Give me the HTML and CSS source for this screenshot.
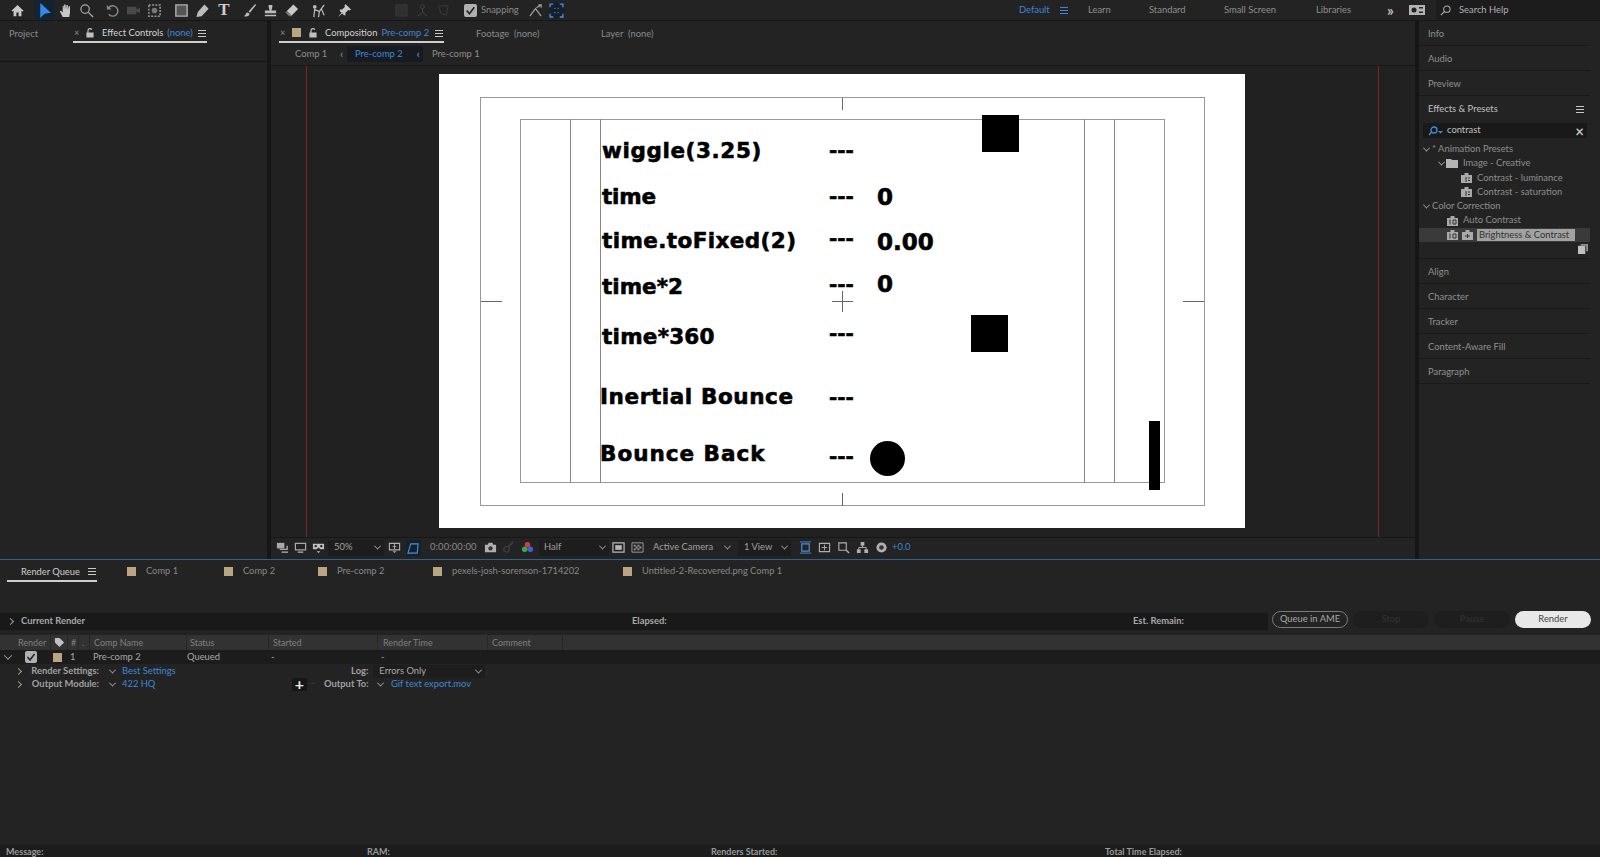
FILE: index.html
```html
<!DOCTYPE html>
<html lang="en">
<head>
<meta charset="utf-8">
<title>After Effects</title>
<link rel="stylesheet" href="styles.css">
</head>
<body>
<div class="app">
  <header class="toolbar">
    <div class="tools">
      <div class="tool home"><svg viewBox="0 0 16 16" class="ic"><path d="M8 2 1.5 8.2 3 9l.8-.7V14h3v-4h2.4v4h3V8.300l.8.7 1.500-.8z" fill="#c8c8c8"/></svg></div>
      <div class="group">
        <div class="tool active"><svg viewBox="0 0 16 16" class="ic lg"><path d="M4 1v14l4-4 6-1z" fill="#2d8ceb"/></svg></div>
        <div class="tool"><svg viewBox="0 0 16 16" class="ic"><path d="M5 15 2 9l1-1 2 2V3l1 0 .5 4V1.500h1.500L8.500 7l.5-5h1.500v5.500l1-4h1.300V10L12 15z" fill="#c8c8c8"/></svg></div>
        <div class="tool"><svg viewBox="0 0 16 16" class="ic"><circle cx="6.500" cy="6.500" r="4.500" fill="none" stroke="#a8a8a8" stroke-width="1.300"/><path d="m10 10 5 5" stroke="#a8a8a8" stroke-width="1.500"/></svg></div>
      </div>
      <div class="group">
        <div class="tool"><svg viewBox="0 0 16 16" class="ic"><path d="M4 5a5.500 5.500 0 1 1 0 7" fill="none" stroke="#8a8a8a" stroke-width="1.500"/><path d="m2 2 0 5 5 0z" fill="#8a8a8a"/></svg></div>
        <div class="tool"><svg viewBox="0 0 16 16" class="ic"><path d="M1 4h10v8H1zM11 7l4-2v6l-4-2z" fill="#4a4a4a"/></svg></div>
        <div class="tool"><svg viewBox="0 0 16 16" class="ic"><path d="M2 2h12v12H2z" fill="none" stroke="#9a9a9a" stroke-width="1.600" stroke-dasharray="2 1.500"/><circle cx="8" cy="8" r="3" fill="#777"/></svg></div>
      </div>
      <div class="group">
        <div class="tool"><svg viewBox="0 0 16 16" class="ic"><path d="M2 2h12v12H2z" fill="#555" stroke="#b0b0b0" stroke-width="1.500"/></svg></div>
        <div class="tool"><svg viewBox="0 0 16 16" class="ic"><path d="M10 1.500 14.500 6 7 14l-5.500 1L3 9.500z" fill="#bcbcbc"/></svg></div>
        <div class="tool tool-t">T</div>
      </div>
      <div class="group">
        <div class="tool"><svg viewBox="0 0 16 16" class="ic"><path d="M14 1 7 9l1.500 1.500L15 2zM6 10c-2 0-2 3-4 4 3 1 6 0 6-2.500z" fill="#bcbcbc"/></svg></div>
        <div class="tool"><svg viewBox="0 0 16 16" class="ic"><path d="M6 2h4v2L9 8h5v3H2V8h5L6 4zM2 12.500h12V14H2z" fill="#bcbcbc"/></svg></div>
        <div class="tool"><svg viewBox="0 0 16 16" class="ic"><path d="M10 1.500 15 6.500 8 13.500 3 8.500z" fill="#c8c8c8"/><path d="M3 8.500 1.500 10l4 4H8l.5-.5z" fill="#777"/></svg></div>
      </div>
      <div class="group">
        <div class="tool"><svg viewBox="0 0 16 16" class="ic"><circle cx="4" cy="4" r="2" fill="#bcbcbc"/><path d="M4 6 3 15M4 7l5 2 5-7M9 9l-1 6M11 6l3 7" stroke="#bcbcbc" stroke-width="1.300" fill="none"/></svg></div>
      </div>
      <div class="group">
        <div class="tool"><svg viewBox="0 0 16 16" class="ic"><path d="m9 1 6 6-2 1-1-.500L9 10.500V13l-1.500 0L3 8.500V7h2.500L8.500 4 8 3zM5 10l-4 5 5-4z" fill="#c8c8c8"/></svg></div>
      </div>
      <div class="group g-dim">
        <div class="tool"><svg viewBox="0 0 16 16" class="ic"><path d="M2 2h12v12H2z" fill="#303030" stroke="#3a3a3a"/></svg></div>
        <div class="tool"><svg viewBox="0 0 16 16" class="ic"><circle cx="8" cy="4" r="2" fill="none" stroke="#444"/><path d="M8 6v4M8 10l-5 4M8 10l5 4" stroke="#444" fill="none"/></svg></div>
        <div class="tool"><svg viewBox="0 0 16 16" class="ic"><path d="m3 3 10 0-2 10-6-2z" fill="none" stroke="#3c3c3c"/></svg></div>
      </div>
      <div class="snap">
        <span class="check"><svg viewBox="0 0 12 12"><path d="m2.500 6 2.500 3 4.500-6" fill="none" stroke="#222" stroke-width="1.500"/></svg></span>
        <span class="dim-label">Snapping</span>
        <svg viewBox="0 0 16 16" class="ic snap-a"><path d="m2 14 6-8 6 8M9 5l5-3M11 2h3v3" fill="none" stroke="#a0a0a0" stroke-width="1.300"/></svg>
        <span class="snap-b"><svg viewBox="0 0 14 14"><path d="M1 4V1h3M10 1h3v3M13 10v3h-3M4 13H1v-3" fill="none" stroke="#4a8fd8" stroke-width="1.300"/><path d="M5 5h1M8 5h1M5 9h1M8 9h1" stroke="#4a8fd8"/></svg></span>
      </div>
    </div>
    <nav class="workspaces">
      <span class="blue ws-default">Default</span>
      <span class="ham ham-blue"></span>
      <span class="ws-item ws-learn">Learn</span>
      <span class="ws-item ws-std">Standard</span>
      <span class="ws-item ws-small">Small Screen</span>
      <span class="ws-item ws-lib">Libraries</span>
      <span class="ws-more">»</span>
      <span class="ws-cam"><svg viewBox="0 0 16 10"><path d="M0 0h16v10H0z" fill="#b4b4b4"/><circle cx="5" cy="5" r="2.500" fill="#222"/><path d="M10 2h4v1.500h-4zM10 6.500h4V8h-4z" fill="#222"/></svg></span>
      <div class="help">
        <svg viewBox="0 0 12 12" class="help-ic"><circle cx="7.500" cy="4.500" r="3.500" fill="none" stroke="#b0b0b0" stroke-width="1.100"/><path d="M5 7 1 11" stroke="#b0b0b0" stroke-width="1.200"/></svg>
        <span>Search Help</span>
      </div>
    </nav>
  </header>

  <main class="work">
    <section class="left">
      <div class="tabs left-tabs">
        <span class="tab-plain project">Project</span>
        <div class="tab-on ec">
          <span class="x">×</span>
          <svg viewBox="0 0 10 10" class="lock"><path d="M2 5h6v4H2zM3 5V2.500a2 2 0 0 1 3.800-.8" fill="none" stroke="#c0c0c0" stroke-width="1.200"/><path d="M2 5h6v4H2z" fill="#c0c0c0"/></svg>
          <span class="on-text">Effect Controls</span>
          <span class="blue">(none)</span>
          <span class="ham"></span>
        </div>
      </div>
    </section>

    <section class="center">
      <div class="center-head">
        <div class="tabs">
          <div class="tab-on comp-tab">
            <span class="x">×</span>
            <span class="swatch"></span>
            <svg viewBox="0 0 10 10" class="lock"><path d="M2 5h6v4H2zM3 5V2.500a2 2 0 0 1 3.800-.8" fill="none" stroke="#c0c0c0" stroke-width="1.200"/><path d="M2 5h6v4H2z" fill="#c0c0c0"/></svg>
            <span class="on-text">Composition</span>
            <span class="blue">Pre-comp 2</span>
            <span class="ham"></span>
          </div>
          <span class="tab-plain footage">Footage&nbsp; (none)</span>
          <span class="tab-plain layer">Layer&nbsp; (none)</span>
        </div>
        <div class="crumbs">
          <span class="crumb-a">Comp 1</span>
          <span class="crumb-sep">‹</span>
          <span class="crumb-on"><span class="blue">Pre-comp 2</span><span class="blue crumb-in">‹</span></span>
          <span>Pre-comp 1</span>
        </div>
      </div>

      <div class="viewer">
        <i class="red red-l"></i>
        <i class="red red-r"></i>
        <div class="comp">
          <i class="safe outer"></i>
          <i class="safe inner"></i>
          <i class="v v1"></i><i class="v v2"></i><i class="v v3"></i><i class="v v4"></i>
          <i class="tick t-top"></i><i class="tick t-bot"></i><i class="tick t-l"></i><i class="tick t-r"></i>
          <i class="cross-h"></i><i class="cross-v"></i>
          <span class="txt l1">wiggle(3.25)</span>
          <span class="txt l2">time</span>
          <span class="txt l3">time.toFixed(2)</span>
          <span class="txt l4">time*2</span>
          <span class="txt l5">time*360</span>
          <span class="txt l6">Inertial Bounce</span>
          <span class="txt l7">Bounce Back</span>
          <span class="txt d d1">---</span><span class="txt d d2">---</span><span class="txt d d3">---</span><span class="txt d d4">---</span><span class="txt d d5">---</span><span class="txt d d6">---</span><span class="txt d d7">---</span>
          <span class="txt n n1">0</span><span class="txt n n2">0.00</span><span class="txt n n3">0</span>
          <i class="sq sq1"></i><i class="sq sq2"></i><i class="dot"></i><i class="bar"></i>
        </div>
      </div>

      <div class="vfoot">
        <svg viewBox="0 0 14 14" class="fi f1"><path d="M1 2h8v6H1z" fill="#a8a8a8"/><path d="M4 9h8V5" fill="none" stroke="#a8a8a8" stroke-width="1.500"/><path d="M6 12h7" stroke="#a8a8a8" stroke-width="1.500"/></svg>
        <svg viewBox="0 0 14 14" class="fi f2"><path d="M1.500 2.500h11v7h-11z" fill="none" stroke="#a8a8a8" stroke-width="1.300"/><path d="M4 12h6" stroke="#a8a8a8" stroke-width="1.500"/></svg>
        <svg viewBox="0 0 14 14" class="fi f3"><path d="M1 3h12v6H9L7 7 5 9H1z" fill="#c0c0c0"/><circle cx="4" cy="5.500" r="1.300" fill="#222"/><circle cx="10" cy="5.500" r="1.300" fill="#222"/><path d="m5 11 2 2 2-2z" fill="#c0c0c0"/></svg>
        <span class="dd dd-zoom"><span>50%</span><b class="chev"></b></span>
        <svg viewBox="0 0 14 14" class="fi f4"><path d="M1.500 2.500h11v7h-11z" fill="none" stroke="#b0b0b0" stroke-width="1.200"/><path d="M7 3v6M5 6h4" stroke="#b0b0b0"/><path d="m5 11 2 2 2-2z" fill="#b0b0b0"/></svg>
        <span class="mask"><svg viewBox="0 0 14 14"><path d="M4 2h8l-1 10H1z" fill="none" stroke="#4a8fd8" stroke-width="1.200"/></svg></span>
        <span class="tc">0:00:00:00</span>
        <svg viewBox="0 0 14 14" class="fi f5"><path d="M1 4h3l1-2h4l1 2h3v8H1z" fill="#b0b0b0"/><circle cx="7" cy="8" r="2.300" fill="#333"/></svg>
        <svg viewBox="0 0 14 14" class="fi f6"><circle cx="5" cy="9" r="3" fill="none" stroke="#3e3e3e" stroke-width="1.500"/><path d="m7 6 5-5" stroke="#3e3e3e" stroke-width="2"/></svg>
        <svg viewBox="0 0 14 14" class="fi f7"><circle cx="7" cy="4" r="3" fill="#d83a3a"/><circle cx="4" cy="9" r="3" fill="#3aa84a"/><circle cx="10" cy="9" r="3" fill="#3a62d8"/></svg>
        <span class="dd dd-half"><span>Half</span><b class="chev"></b></span>
        <svg viewBox="0 0 14 14" class="fi f8"><path d="M1 2h12v10H1z" fill="none" stroke="#b8b8b8" stroke-width="1.300"/><path d="M3.500 4.500h7v5h-7z" fill="#b8b8b8"/></svg>
        <svg viewBox="0 0 14 14" class="fi f9"><path d="M1 2h12v10H1z" fill="none" stroke="#a0a0a0"/><path d="M3 4h2v2H3zM7 4h2v2H7zM5 6h2v2H5zM9 6h2v2H9zM3 8h2v2H3zM7 8h2v2H7z" fill="#a0a0a0"/></svg>
        <span class="dd dd-cam"><span>Active Camera</span><b class="chev"></b></span>
        <span class="dd dd-view"><span>1 View</span><b class="chev"></b></span>
        <svg viewBox="0 0 14 14" class="fi f10"><path d="M3 3h8v8H3z" fill="none" stroke="#4a8fd8" stroke-width="1.300"/><path d="M1 1h12M1 13h12" stroke="#4a8fd8"/></svg>
        <svg viewBox="0 0 14 14" class="fi f11"><path d="M1.500 2.500h11v9h-11z" fill="none" stroke="#b0b0b0" stroke-width="1.200"/><path d="M7 4v6M4 7h6" stroke="#b0b0b0"/></svg>
        <svg viewBox="0 0 14 14" class="fi f12"><path d="M2 2h8v8H2z" fill="none" stroke="#b0b0b0" stroke-width="1.200"/><path d="M10 10l3 3" stroke="#b0b0b0" stroke-width="1.500"/></svg>
        <svg viewBox="0 0 14 14" class="fi f13"><path d="M5 1h4v4H5zM1 9h4v4H1zM9 9h4v4H9z" fill="#b0b0b0"/><path d="M7 5v2M3 9V7h8v2" stroke="#b0b0b0" fill="none"/></svg>
        <svg viewBox="0 0 14 14" class="fi f14"><circle cx="7" cy="7" r="5.500" fill="#b0b0b0"/><circle cx="7" cy="7" r="2.500" fill="#333"/></svg>
        <span class="blue exposure">+0.0</span>
      </div>
    </section>

    <aside class="right">
      <div class="rp"><span>Info</span></div>
      <div class="rp"><span>Audio</span></div>
      <div class="rp"><span>Preview</span></div>
      <div class="fx">
        <div class="fx-head"><span>Effects &amp; Presets</span><span class="ham"></span></div>
        <div class="fx-search">
          <svg viewBox="0 0 16 10" class="fx-s-ic"><circle cx="6" cy="4" r="3" fill="none" stroke="#3d8fe0" stroke-width="1.300"/><path d="M3.500 6 1 9" stroke="#3d8fe0" stroke-width="1.300"/><path d="m10 5 2.500 2.500L15 5z" fill="#3d8fe0"/></svg>
          <span class="fx-q">contrast</span>
          <span class="fx-x">×</span>
        </div>
        <div class="tree">
          <div class="node i0"><b class="chev"></b><span>* Animation Presets</span></div>
          <div class="node i1"><b class="chev"></b><svg viewBox="0 0 12 10" class="folder"><path d="M0 1h5l1 1h6v8H0z" fill="#b4b4b4"/></svg><span>Image - Creative</span></div>
          <div class="node i2"><svg viewBox="0 0 11 10" class="preset"><path d="M0 2h3.500V0h4v2H11v8H0z" fill="#aaa"/><path d="M5 4v5M7 5h2M7 7.500h2" stroke="#333"/></svg><span>Contrast - luminance</span></div>
          <div class="node i2"><svg viewBox="0 0 11 10" class="preset"><path d="M0 2h3.500V0h4v2H11v8H0z" fill="#aaa"/><path d="M5 4v5M7 5h2M7 7.500h2" stroke="#333"/></svg><span>Contrast - saturation</span></div>
          <div class="node i0"><b class="chev"></b><span>Color Correction</span></div>
          <div class="node i3"><svg viewBox="0 0 11 10" class="preset"><path d="M0 2h3.500V0h4v2H11v8H0z" fill="#aaa"/><path d="M3 3.500v5M6 4h3v4H6z" stroke="#333" fill="none"/></svg><span>Auto Contrast</span></div>
          <div class="node i3 sel"><svg viewBox="0 0 11 10" class="preset"><path d="M0 2h3.500V0h4v2H11v8H0z" fill="#aaa"/><path d="M3 3.500v5M6 4h3v4H6z" stroke="#333" fill="none"/></svg><svg viewBox="0 0 11 10" class="preset p2"><path d="M0 2h3.500V0h4v2H11v8H0z" fill="#aaa"/><path d="M3 6h5M5.500 4v4" stroke="#333"/></svg><span class="sel-label">Brightness &amp; Contrast</span></div>
        </div>
        <div class="fx-foot"><svg viewBox="0 0 11 11" class="newp"><path d="M0 2h8v9H0z" fill="#c0c0c0"/><path d="M3 0h8v8H9V2H3z" fill="#909090"/></svg></div>
      </div>
      <div class="rp"><span>Align</span></div>
      <div class="rp"><span>Character</span></div>
      <div class="rp"><span>Tracker</span></div>
      <div class="rp"><span>Content-Aware Fill</span></div>
      <div class="rp"><span>Paragraph</span></div>
    </aside>
  </main>

  <section class="queue">
    <div class="q-tabs">
      <div class="q-on"><span>Render Queue</span><span class="ham"></span></div>
      <div class="q-tab t1"><i class="swatch"></i>Comp 1</div>
      <div class="q-tab t2"><i class="swatch"></i>Comp 2</div>
      <div class="q-tab t3"><i class="swatch"></i>Pre-comp 2</div>
      <div class="q-tab t4"><i class="swatch"></i>pexels-josh-sorenson-1714202</div>
      <div class="q-tab t5"><i class="swatch"></i>Untitled-2-Recovered.png Comp 1</div>
    </div>
    <div class="current">
      <div class="cur-bar">
        <b class="chev side"></b>
        <strong class="cur-title">Current Render</strong>
        <strong class="cur-elapsed">Elapsed:</strong>
        <strong class="cur-remain">Est. Remain:</strong>
      </div>
      <div class="btns">
        <span class="btn ame">Queue in AME</span>
        <span class="btn off">Stop</span>
        <span class="btn off">Pause</span>
        <span class="btn go">Render</span>
      </div>
    </div>
    <div class="thead">
      <span class="c c-render">Render</span>
      <span class="c c-tag"><svg viewBox="0 0 12 12"><path d="M1 1h5l5 5-5 5-5-5z" fill="#c0c0c0"/></svg></span>
      <span class="c c-num">#</span>
      <span class="c c-dot">.</span>
      <span class="c c-name">Comp Name</span>
      <span class="c c-status">Status</span>
      <span class="c c-started">Started</span>
      <span class="c c-time">Render Time</span>
      <span class="c c-comment">Comment</span>
    </div>
    <div class="trow">
      <b class="chev chev-row"></b>
      <span class="check sm"><svg viewBox="0 0 12 12"><path d="m2.500 6 2.500 3 4.500-6" fill="none" stroke="#222" stroke-width="1.500"/></svg></span>
      <i class="swatch row-sw"></i>
      <span class="r-num">1</span>
      <span class="r-name">Pre-comp 2</span>
      <span class="r-status">Queued</span>
      <span class="r-started">-</span>
      <span class="r-time">-</span>
    </div>
    <div class="srow s-one">
      <b class="chev side"></b>
      <strong class="s-label">Render Settings:</strong>
      <b class="chev s-chev"></b>
      <span class="blue s-val">Best Settings</span>
      <strong class="s-log">Log:</strong>
      <span class="dd dd-log"><span>Errors Only</span><b class="chev"></b></span>
    </div>
    <div class="srow">
      <b class="chev side"></b>
      <strong class="s-label">Output Module:</strong>
      <b class="chev s-chev"></b>
      <span class="blue s-val">422 HQ</span>
      <span class="plus">+</span>
      <span class="minus">−</span>
      <strong class="s-out">Output To:</strong>
      <b class="chev s-chev2"></b>
      <span class="blue">Gif text export.mov</span>
    </div>
    <div class="q-fill"></div>
    <footer class="status">
      <strong class="st st1">Message:</strong>
      <strong class="st st2">RAM:</strong>
      <strong class="st st3">Renders Started:</strong>
      <strong class="st st4">Total Time Elapsed:</strong>
    </footer>
  </section>
</div>
</body>
</html>
```
FILE: styles.css
```css
* { box-sizing: border-box; }
html, body { margin: 0; height: 100%; overflow: hidden; }
body { background: #1c1c1c; color: #9c9c9c; font: 9.4px/1.1 Lato, "Noto Sans", sans-serif; white-space: nowrap; }
.app { width: 1600px; height: 857px; display: flex; flex-direction: column; }
.blue { color: #3f86d6; }
i { display: block; }
.ic { width: 15px; height: 15px; display: block; }
.ic.lg { width: 17px; height: 17px; }

/* toolbar */
.toolbar { height: 21px; display: flex; align-items: center; background: #232323; border-bottom: 1px solid #161616; flex: none; }
.tools { display: flex; align-items: center; gap: 5.5px; padding-left: 7px; width: 1019px; flex: none; }
.group { display: flex; }
.tool { width: 21px; height: 20px; display: flex; align-items: center; justify-content: center; }
.tool.active { background: #15222f; }
.tool-t { font: 700 17px "Liberation Serif", serif; color: #d0d0d0; padding-left: 2px; }
.g-dim { margin-left: 30px; }
.snap { display: flex; align-items: center; margin-left: 5px; }
.check { width: 13px; height: 13px; background: #b0b0b0; border-radius: 2px; display: block; }
.check svg { display: block; }
.dim-label { margin-left: 4px; width: 41px; color: #8a8a8a; }
.snap-a { margin-left: 6px; }
.snap-b { width: 15px; height: 15px; margin-left: 6px; background: #14202c; display: block; }
.snap-b svg { display: block; }

.workspaces { display: flex; align-items: center; flex: 1; height: 20px; }
.ws-default { width: 41px; }
.ham { width: 8px; height: 7px; display: block; flex: none; border-top: 1px solid #c8c8c8; border-bottom: 1px solid #c8c8c8; position: relative; }
.ham::after { content: ""; position: absolute; left: 0; right: 0; top: 2px; height: 1px; background: #c8c8c8; }
.ham-blue { border-color: #3f86d6; }
.ham-blue::after { background: #3f86d6; }
.ws-item { color: #8e8e8e; flex: none; }
.ws-learn { margin-left: 20px; width: 61px; }
.ws-std { width: 75px; }
.ws-small { width: 92px; }
.ws-lib { width: 71px; }
.ws-more { width: 22px; font-size: 15px; font-weight: 700; color: #c0c0c0; line-height: 14px; }
.ws-cam { width: 16px; height: 10px; display: block; flex: none; }
.ws-cam svg { display: block; }
.help { margin-left: 11px; width: 164px; height: 20px; background: #1c1c1c; display: flex; align-items: center; padding-left: 4px; color: #b0b0b0; flex: none; }
.help-ic { width: 11px; height: 11px; margin-right: 8px; }

/* main area */
.work { height: 538px; display: flex; gap: 4px; flex: none; background: #161616; }
.left { width: 267px; background: #232323; flex: none; }
.center { flex: 1; background: #232323; display: flex; flex-direction: column; }
.right { width: 181px; background: #232323; flex: none; }

.tabs { display: flex; height: 23px; align-items: flex-start; }
.left-tabs { height: 41px; border-bottom: 1px solid #121212; }
.tab-plain { margin-top: 8px; color: #8a8a8a; flex: none; }
.project { margin-left: 9px; width: 64px; }
.tab-on { height: 22px; padding: 7px 1px 0 0; border-bottom: 2px solid #cfcfcf; display: flex; align-items: flex-start; color: #cfcfcf; flex: none; }
.tab-on .ham { margin-left: auto; margin-top: 2px; }
.ec { width: 134px; }
.x { width: 12px; padding-left: 1px; color: #8a8a8a; flex: none; }
.lock { width: 10px; height: 10px; flex: none; }
.on-text { margin-left: 7px; color: #d2d2d2; margin-right: 4px; }
.comp-tab { margin-left: 8px; width: 165px; }
.swatch { width: 9px; height: 9px; background: #b9a57f; display: block; flex: none; }
.comp-tab .x { width: 13px; }
.comp-tab .lock { margin-left: 7px; }
.footage { margin-left: 32px; width: 64px; }
.layer { margin-left: 61px; }

.center-head { height: 45px; border-bottom: 1px solid #161616; flex: none; }
.crumbs { display: flex; align-items: center; height: 20px; padding-left: 24px; color: #8e8e8e; }
.crumb-a { width: 45px; }
.crumb-sep { width: 7px; font-size: 12px; }
.crumb-on { width: 76px; height: 16px; background: #171a1e; display: flex; align-items: center; padding-left: 8px; margin-right: 9px; justify-content: space-between; padding-right: 3px; }
.crumb-in { font-weight: 700; font-size: 12px; }

.viewer { height: 471px; flex: none; position: relative; background: #212121; overflow: hidden; padding: 8px 0 0 168px; }
.red { position: absolute; top: 0; bottom: 0; width: 1px; background: #7a2626; }
.red-l { left: 35px; }
.red-r { left: 1107px; }

.comp { position: relative; width: 806px; height: 454px; background: #fff; font-family: "DejaVu Sans", sans-serif; }
.safe { position: absolute; border: 1px solid #999; }
.outer { left: 41px; top: 23px; width: 725px; height: 409px; }
.inner { left: 81px; top: 45px; width: 645px; height: 364px; }
.v { position: absolute; top: 45px; height: 364px; width: 1px; background: #888; }
.v1 { left: 131px; }
.v2 { left: 161px; }
.v3 { left: 645px; }
.v4 { left: 675px; }
.tick { position: absolute; background: #666; }
.t-top { left: 403px; top: 24px; width: 1px; height: 12px; }
.t-bot { left: 403px; top: 419px; width: 1px; height: 13px; }
.t-l { left: 42px; top: 227px; width: 21px; height: 1px; }
.t-r { left: 744px; top: 227px; width: 21px; height: 1px; }
.cross-h { position: absolute; left: 393px; top: 227px; width: 21px; height: 1px; background: #666; }
.cross-v { position: absolute; left: 403px; top: 217px; width: 1px; height: 21px; background: #666; }

.txt { position: absolute; color: #000; font-weight: 700; white-space: nowrap; font-size: 21.5px; line-height: 30px; -webkit-text-stroke: .6px #000; }
.l1 { left: 163px; top: 62px; letter-spacing: .6px; }
.l2 { left: 163px; top: 108px; letter-spacing: -.2px; }
.l3 { left: 163px; top: 152px; letter-spacing: .4px; }
.l4 { left: 163px; top: 198px; }
.l5 { left: 163px; top: 248px; letter-spacing: .25px; }
.l6 { left: 161px; top: 308px; letter-spacing: .6px; }
.l7 { left: 161px; top: 365px; letter-spacing: 1px; }
.d { left: 390px; font-size: 20px; letter-spacing: 0; }
.d1 { top: 61px; }
.d2 { top: 107px; }
.d3 { top: 149px; }
.d4 { top: 195px; }
.d5 { top: 244px; }
.d6 { top: 308px; }
.d7 { top: 367px; }
.n { left: 438px; font-size: 23px; }
.n1 { top: 108px; }
.n2 { top: 153px; }
.n3 { top: 195px; }
.sq { position: absolute; background: #000; width: 37px; height: 37px; }
.sq1 { left: 543px; top: 41px; }
.sq2 { left: 532px; top: 241px; }
.dot { position: absolute; left: 431px; top: 367px; width: 35px; height: 35px; border-radius: 50%; background: #000; }
.bar { position: absolute; left: 710px; top: 347px; width: 11px; height: 69px; background: #000; }

/* viewer footer */
.vfoot { height: 22px; flex: none; display: flex; align-items: center; background: #232323; border-top: 1px solid #161616; padding: 0 0 2px 5px; color: #a0a0a0; }
.fi { width: 13px; height: 13px; flex: none; display: block; }
.f2 { margin-left: 5px; }
.f3 { margin-left: 5px; }
.dd { display: flex; align-items: center; justify-content: space-between; background: #1d1d1d; height: 16px; flex: none; }
.chev { display: block; width: 5px; height: 5px; border-right: 1px solid #9a9a9a; border-bottom: 1px solid #9a9a9a; transform: rotate(45deg) translate(-1px, -1px); flex: none; }
.chev.side { transform: rotate(-45deg); }
.dd-zoom { width: 56px; margin-left: 3px; padding: 0 4px 0 6px; }
.f4 { margin-left: 4px; }
.mask { display: block; width: 15px; height: 16px; margin-left: 5px; background: #14202c; padding: 2px 1px; }
.mask svg { display: block; }
.tc { margin-left: 9px; width: 54px; color: #8a8a8a; letter-spacing: .15px; flex: none; }
.f6 { margin-left: 5px; }
.f7 { margin-left: 6px; }
.dd-half { width: 70px; margin-left: 5px; padding: 0 4px 0 5px; }
.f8 { margin-left: 3px; }
.f9 { margin-left: 6px; }
.dd-cam { width: 88px; margin-left: 3px; padding: 0 5px 0 6px; background: transparent; }
.dd-view { width: 53px; margin-left: 3px; padding: 0 4px 0 6px; }
.f10 { margin-left: 8px; }
.f11 { margin-left: 6px; }
.f12 { margin-left: 6px; }
.f13 { margin-left: 6px; }
.f14 { margin-left: 6px; }
.exposure { margin-left: 4px; }

/* right column */
.rp { height: 25px; display: flex; align-items: center; padding: 2px 0 0 9px; border-bottom: 1px solid #191919; margin-right: 10px; color: #909090; }
.fx { height: 163px; border-bottom: 1px solid #191919; margin-right: 10px; }
.fx-head { height: 26px; display: flex; align-items: center; justify-content: space-between; padding: 0 6px 0 9px; color: #c0c0c0; }
.fx-search { height: 15px; margin: 1px 3px 0 4px; background: #191919; display: flex; align-items: center; padding-left: 5px; color: #c0c0c0; }
.fx-s-ic { width: 16px; height: 10px; }
.fx-q { margin-left: 3px; }
.fx-x { margin-left: auto; margin-right: 3px; font-size: 15px; font-weight: 700; line-height: 12px; color: #c0c0c0; }
.tree { margin-top: 4px; }
.node { height: 14.300px; display: flex; align-items: center; color: #8e8e8e; white-space: nowrap; }
.i0 { padding-left: 5px; }
.i0 span { margin-left: 3px; }
.i1 { padding-left: 20px; }
.i1 .folder { margin-left: 2px; }
.i1 span { margin-left: 5px; }
.i2 { padding-left: 42px; }
.i2 span { margin-left: 5px; }
.i3 { padding-left: 28px; }
.i3 span { margin-left: 5px; }
.folder { width: 12px; height: 10px; flex: none; }
.preset { width: 11px; height: 10px; flex: none; }
.p2 { margin-left: 4px; }
.sel { background: #3a3a3a; }
.node .sel-label { background: #a2a2a2; color: #333; margin-left: 4px; padding: 1px 0 1px 2px; width: 98px; }
.fx-foot { height: 13px; display: flex; align-items: center; justify-content: flex-end; padding-right: 2px; }
.newp { width: 10px; height: 10px; display: block; }

/* render queue */
.queue { flex: 1; display: flex; flex-direction: column; background: #232323; border-top: 1px solid #335f8c; min-height: 0; }
.q-tabs { height: 24px; display: flex; align-items: flex-start; flex: none; font-size: 9.300px; }
.q-on { margin-left: 7px; width: 90px; height: 22px; border-bottom: 2px solid #cfcfcf; padding: 7px 1px 0 14px; display: flex; justify-content: space-between; color: #cfcfcf; flex: none; }
.q-on .ham { margin-top: 1px; }
.q-tab { display: flex; align-items: center; height: 22px; color: #888; flex: none; }
.q-tab .swatch { margin-right: 10px; }
.t1 { margin-left: 30px; width: 97px; }
.t2 { width: 94px; }
.t3 { width: 115px; }
.t4 { width: 190px; }

.current { height: 26px; margin-top: 23px; display: flex; align-items: center; flex: none; }
.cur-bar { width: 1268px; height: 17px; background: #191919; display: flex; align-items: center; padding-left: 8px; color: #a8a8a8; margin-top: 2px; }
.cur-title { margin-left: 8px; width: 611px; font-weight: 700; }
.cur-elapsed { width: 501px; font-weight: 700; }
.cur-remain { font-weight: 700; }
.btns { display: flex; gap: 5px; margin-left: 4px; margin-top: -1px; }
.btn { width: 76px; height: 17px; border-radius: 9px; display: flex; align-items: center; justify-content: center; }
.ame { border: 1px solid #7a7a7a; color: #a8a8a8; }
.off { background: #1e1e1e; color: #333; }
.go { background: #e8e8e8; color: #444; }

.thead { height: 15px; background: #323232; margin-top: 2px; display: flex; align-items: center; flex: none; color: #808080; font-size: 9px; }
.c { height: 100%; display: flex; align-items: center; padding-left: 3px; border-right: 1px solid #272727; flex: none; }
.c-render { margin-left: 15px; width: 36px; }
.c-tag { width: 17px; padding-left: 3px; }
.c-tag svg { width: 11px; height: 11px; }
.c-num { width: 11px; }
.c-dot { width: 11px; }
.c-name { width: 97px; padding-left: 4px; }
.c-status { width: 82px; }
.c-started { width: 109px; padding-left: 4px; }
.c-time { width: 110px; padding-left: 5px; }
.c-comment { width: 75px; padding-left: 4px; }

.trow { height: 14px; background: #1c1c1c; display: flex; align-items: center; flex: none; color: #a8a8a8; padding-left: 5px; margin-bottom: 1px; }
.chev-row { width: 6px; height: 6px; }
.sm { margin-left: 14px; width: 12px; height: 12px; }
.row-sw { margin-left: 16px; }
.r-num { margin-left: 8px; width: 23px; }
.r-name { width: 94px; }
.r-status { width: 84px; }
.r-started { width: 110px; }

.srow { height: 13px; display: flex; align-items: center; flex: none; padding-left: 16px; color: #a8a8a8; }
.s-label { width: 75px; margin-left: 3px; text-align: right; font-weight: 700; color: #a0a0a0; }
.s-chev { margin-left: 11px; }
.s-val { margin-left: 7px; width: 46px; flex: none; }
.s-log { margin-left: 183px; font-weight: 700; color: #a0a0a0; }
.dd-log { width: 112px; height: 13px; margin-left: 5px; padding: 0 4px 0 6px; }
.plus { margin-left: 124px; width: 15px; height: 13px; background: #161616; color: #e8e8e8; font-size: 16px; font-weight: 700; line-height: 12px; text-align: center; display: block; flex: none; }
.minus { width: 11px; color: #444; text-align: center; flex: none; }
.s-out { margin-left: 6px; width: 44px; text-align: right; font-weight: 700; color: #a0a0a0; flex: none; }
.s-chev2 { margin-left: 10px; margin-right: 8px; }
.q-fill { flex: 1; }
.status { height: 12px; flex: none; background: #1c1c1c; display: flex; align-items: flex-start; padding: 2px 0 0 6px; color: #9a9a9a; font-size: 9px; }
.st { font-weight: 700; }
.st1 { width: 361px; }
.st2 { width: 344px; }
.st3 { width: 394px; }
```
